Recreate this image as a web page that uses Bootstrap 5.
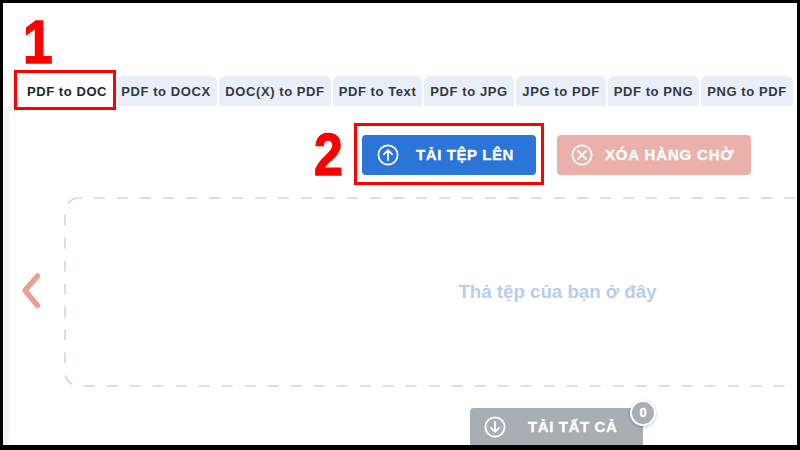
<!DOCTYPE html>
<html lang="vi">
<head>
<meta charset="utf-8">
<title>PDF to DOC</title>
<link href="https://cdn.jsdelivr.net/npm/bootstrap@5.3.0/dist/css/bootstrap.min.css" rel="stylesheet">
<style>
html, body { margin: 0; height: 450px; overflow: hidden; background: #000; }
body { font-family: "Liberation Sans", Arial, sans-serif; }
.frame { position: relative; width: 794px; height: 442px; margin: 3px 0 0 3px; background: #fff; overflow: hidden; }
.tabs-row { padding: 73px 0 0 14px; gap: 2px; height: 103px; }
.tab-item { height: 30px; padding-top: 2px; border-radius: 6px 6px 0 0; background: #e8eff9; color: #33383f; font-size: 13px; font-weight: 700; letter-spacing: .58px; white-space: nowrap; }
.tab-item.on { background: #fff; color: #22262b; }
.tab-a { width: 98px; padding-left: 2px; } .tab-b { width: 100px; padding-right: 2px; } .tab-c { width: 112px; } .tab-d { width: 89px; }
.tab-e { width: 90px; } .tab-f { width: 90px; } .tab-g { width: 91px; } .tab-h { width: 92px; }
.panel { height: 339px; background: #f1f5fb; }
.sheet { height: 339px; margin-left: 6px; border-radius: 10px 0 0 0; background: #fff; }
.action-row { padding: 29px 0 0 0; height: 91px; gap: 21px; margin-left: 353px; }
.act { height: 40px; border: 0; border-radius: 4px; color: #fff; font-size: 15px; font-weight: 700; letter-spacing: .6px; padding: 0; white-space: nowrap; -webkit-text-stroke: .3px #fff; }
.act svg { flex: none; }
.act-up { width: 174px; background: #2b74d8; }
.act-up svg { margin: 0 17px 0 15px; }
.act-clear { width: 194px; background: #ecb0ab; letter-spacing: .85px; }
.act-clear svg { margin: 0 12px 0 14px; }
.drop-row { height: 190px; margin-left: 55px; }
.drop-zone { position: relative; flex: none; width: 760px; height: 190px; color: #b6cdf0; font-size: 18.7px; font-weight: 700; padding-left: 227px; }
.drop-line { position: absolute; left: 0; top: 0; }
.down-row { margin: 21px 0 0 461px; }
.act-down { position: relative; width: 173px; height: 44px; background: #a9adb4; align-items: flex-start; }
.act-down svg { margin: 8px 22px 0 14px; }
.act-down span.lbl { margin-top: 8px; }
.count { position: absolute; top: -8px; right: -13px; width: 26px; height: 26px; border-radius: 50%; background: #a9adb4; color: #fff; border: 2px solid #fff; font-size: 13px; box-shadow: 0 1px 3px rgba(0,0,0,.25); letter-spacing: 0; }
.chev { position: absolute; left: 18px; top: 269px; }
.num { position: absolute; color: #f00; font-weight: 700; line-height: 1; font-family: "Liberation Sans", Arial, sans-serif; -webkit-text-stroke: 1.5px #f00; transform-origin: 0 0; }
.num-a { left: 20px; top: 8px; font-size: 62px; transform: scaleX(.86); }
.num-b { left: 311px; top: 122px; font-size: 60px; transform: scaleX(.86); }
.mark-box { position: absolute; border: 3px solid #f00; }
.mark-a { left: 11px; top: 67px; width: 102px; height: 40px; }
.mark-b { left: 351px; top: 120px; width: 190px; height: 62px; }
</style>
</head>
<body>
<div class="frame">
  <div class="tabs-row d-flex">
    <div class="tab-item on tab-a d-flex align-items-center justify-content-center">PDF to DOC</div>
    <div class="tab-item tab-b d-flex align-items-center justify-content-center">PDF to DOCX</div>
    <div class="tab-item tab-c d-flex align-items-center justify-content-center">DOC(X) to PDF</div>
    <div class="tab-item tab-d d-flex align-items-center justify-content-center">PDF to Text</div>
    <div class="tab-item tab-e d-flex align-items-center justify-content-center">PDF to JPG</div>
    <div class="tab-item tab-f d-flex align-items-center justify-content-center">JPG to PDF</div>
    <div class="tab-item tab-g d-flex align-items-center justify-content-center">PDF to PNG</div>
    <div class="tab-item tab-h d-flex align-items-center justify-content-center">PNG to PDF</div>
  </div>
  <div class="panel">
    <div class="sheet">
      <div class="action-row d-flex">
        <button class="act act-up d-flex align-items-center" type="button">
          <svg width="22" height="22" viewBox="0 0 22 22" fill="none" stroke="#fff" stroke-width="1.8" stroke-linecap="round" stroke-linejoin="round"><circle cx="11" cy="11" r="9.6"/><path d="M11 16V6.5M7 10.2l4-4 4 4"/></svg>
          <span>TẢI TỆP LÊN</span>
        </button>
        <button class="act act-clear d-flex align-items-center" type="button">
          <svg width="22" height="22" viewBox="0 0 22 22" fill="none" stroke="#fff" stroke-width="1.8" stroke-linecap="round"><circle cx="11" cy="11" r="9.6"/><path d="M7 7l8 8M15 7l-8 8"/></svg>
          <span>XÓA HÀNG CHỜ</span>
        </button>
      </div>
      <div class="drop-row d-flex">
        <div class="drop-zone d-flex align-items-center justify-content-center">
          <svg class="drop-line" width="760" height="190" fill="none" stroke="#c9d6ea" stroke-width="1.6" stroke-dasharray="11 12" stroke-dashoffset="-15"><rect x="1" y="1" width="758" height="188" rx="14"/></svg>
          Thả tệp của bạn ở đây
        </div>
      </div>
      <div class="down-row">
        <button class="act act-down d-flex" type="button">
          <svg width="22" height="22" viewBox="0 0 22 22" fill="none" stroke="#fff" stroke-width="1.8" stroke-linecap="round" stroke-linejoin="round"><circle cx="11" cy="11" r="9.6"/><path d="M11 6v9.5M7 11.8l4 4 4-4"/></svg>
          <span class="lbl">TẢI TẤT CẢ</span>
          <span class="count d-flex align-items-center justify-content-center">0</span>
        </button>
      </div>
    </div>
  </div>
  <svg class="chev" width="24" height="42" viewBox="0 0 24 42" fill="none" stroke="#e8a096" stroke-width="5.5" stroke-linecap="round" stroke-linejoin="round"><path d="M16.5 4L4 18.5l12.5 15"/></svg>
  <div class="num num-a">1</div>
  <div class="num num-b">2</div>
  <div class="mark-box mark-a"></div>
  <div class="mark-box mark-b"></div>
</div>
<script src="https://cdn.jsdelivr.net/npm/bootstrap@5.3.0/dist/js/bootstrap.bundle.min.js"></script>
</body>
</html>
